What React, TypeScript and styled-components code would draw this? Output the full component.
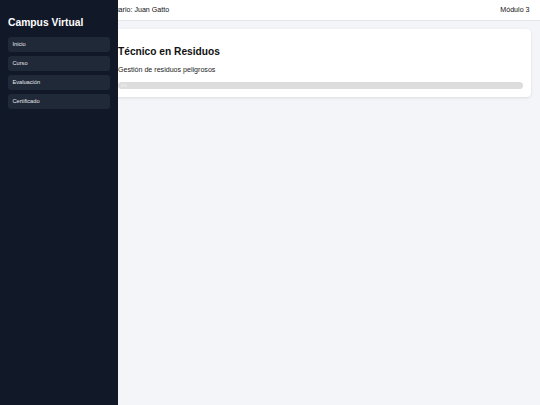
import styled, { createGlobalStyle } from 'styled-components';

const GlobalStyle = createGlobalStyle`
    html, body {
        margin: 0;
        padding: 0;
        background: #f4f5f9;
        font-family: "Liberation Sans", Arial, sans-serif;
    }
`;

const Sidebar = styled.aside`
    position: fixed;
    top: 0;
    left: 0;
    bottom: 0;
    width: 118px;
    background: #111827;
    color: #ffffff;
    padding: 8px 8px;
    box-sizing: border-box;
`;

const Brand = styled.h1`
    font-size: 10.3px;
    font-weight: bold;
    line-height: 12px;
    margin: 9px 0 8px 0;
`;

const Nav = styled.nav`
    display: flex;
    flex-direction: column;
    gap: 4.3px;
`;

const NavItem = styled.div`
    background: #1f2937;
    border-radius: 3px;
    height: 14.7px;
    display: flex;
    align-items: center;
    padding: 0 4.4px;
    font-size: 5.7px;
    color: #e5e7eb;
`;

const Header = styled.header`
    height: 20px;
    background: #ffffff;
    border-bottom: 1px solid #e5e7eb;
    display: flex;
    align-items: center;
    justify-content: space-between;
    padding: 0 10.5px 0 106px;
    font-size: 7.1px;
    color: #111111;
`;

const Main = styled.main`
    padding: 8px 9px 8px 110px;
`;

const Card = styled.section`
    background: #ffffff;
    border-radius: 4px;
    box-shadow: 0 1px 3px rgba(0, 0, 0, 0.1);
    padding: 8px;
`;

const Title = styled.h2`
    font-size: 10.2px;
    line-height: 12px;
    font-weight: bold;
    color: #111111;
    margin: 9px 0 8px 0;
`;

const Subtitle = styled.p`
    font-size: 7.1px;
    line-height: 8.5px;
    color: #222222;
    margin: 0 0 7px 0;
`;

const Track = styled.div`
    height: 7px;
    border-radius: 4px;
    background: #dddddd;
    overflow: hidden;
`;

const Fill = styled.div`
    height: 100%;
    min-width: 12px;
    display: flex;
    align-items: center;
    padding-left: 3px;
    font-size: 4px;
    color: #f5f5f5;
`;

const modules = ['Inicio', 'Curso', 'Evaluación', 'Certificado'];

export default function App() {
    const progress = 0;

    return (
        <>
            <GlobalStyle />
            <Header>
                <span>Usuario: Juan Gatto</span>
                <span>Módulo 3</span>
            </Header>
            <Main>
                <Card>
                    <Title>Técnico en Residuos</Title>
                    <Subtitle>Gestión de residuos peligrosos</Subtitle>
                    <Track>
                        <Fill style={{ width: `${progress}%` }}>{progress}%</Fill>
                    </Track>
                </Card>
            </Main>
            <Sidebar>
                <Brand>Campus Virtual</Brand>
                <Nav>
                    {modules.map((m) => (
                        <NavItem key={m}>{m}</NavItem>
                    ))}
                </Nav>
            </Sidebar>
        </>
    );
}
